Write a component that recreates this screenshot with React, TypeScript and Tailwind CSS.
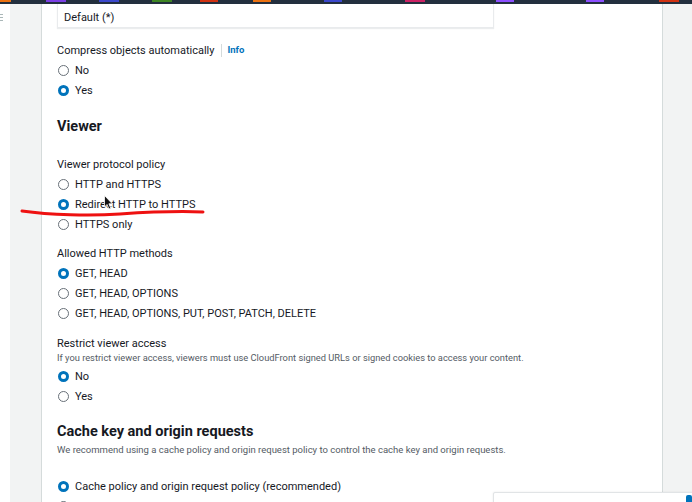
import React from "react";

function Radio({ checked, label }: { checked?: boolean; label: string }) {
  return (
    <div className="flex h-[20px] items-center">
      {checked ? (
        <span className="ml-[1px] box-border h-[11px] w-[11px] rounded-full border-[3.5px] border-[#0073bb] bg-white" />
      ) : (
        <span className="ml-[1px] box-border h-[11px] w-[11px] rounded-full border-[1.5px] border-[#687078] bg-white" />
      )}
      <span className="ml-[6px] text-[11px] leading-none text-[#16191f]">{label}</span>
    </div>
  );
}

const marks: [number, number, string][] = [
  [0, 11, "#ec7211"],
  [46, 20, "#7b3fe4"],
  [99, 20, "#3b48cc"],
  [152, 20, "#3f8624"],
  [200, 18, "#d13212"],
  [253, 18, "#ec7211"],
  [324, 18, "#3b48cc"],
  [405, 20, "#cc2264"],
  [496, 18, "#8c4fff"],
  [586, 18, "#8c4fff"],
  [659, 20, "#d13212"],
];

export default function App() {
  return (
    <div
      className="relative flex h-[502px] w-[692px] flex-col overflow-hidden bg-white"
      style={{ fontFamily: "Roboto, 'Liberation Sans', sans-serif" }}
    >
      {/* top bar */}
      <div className="relative h-[4px] w-full shrink-0 bg-[#232f3e]">
        {marks.map(([x, w, c], i) => (
          <span
            key={i}
            className="absolute top-0 h-[2px]"
            style={{ left: x, width: w, background: c }}
          />
        ))}
      </div>

      <div className="flex flex-1">
        <div className="relative w-[10px] shrink-0 bg-white">
          <div className="mt-[10px] ml-0 flex w-[3px] flex-col gap-[2px]">
            <span className="h-px bg-[#aab7b8]" />
            <span className="h-px bg-[#aab7b8]" />
            <span className="h-px bg-[#aab7b8]" />
          </div>
        </div>
        <div className="box-border w-[32px] shrink-0 border-r border-[#d5dbdb] bg-[#f2f3f3]" />

        {/* card */}
        <div className="flex-1 bg-white pl-[15px]">
          {/* select box */}
          <div className="box-border flex h-[24px] w-[437px] items-center border-x border-b border-[#e9ebed] pl-[6px] pt-[3px] shadow-[0_1px_1px_rgba(0,28,36,0.08)]">
            <span className="text-[11px] leading-none text-[#16191f]">Default (*)</span>
          </div>

          <div className="mt-[12px] flex h-[20px] items-center">
            <span className="text-[11px] leading-none text-[#16191f]">Compress objects automatically</span>
            <span className="mx-[6px] h-[13px] w-px bg-[#d5dbdb]" />
            <span className="text-[9.5px] font-bold leading-none text-[#0073bb]">Info</span>
          </div>
          <Radio label="No" />
          <Radio checked label="Yes" />

          <div className="mt-[15px] flex h-[24px] items-center">
            <span className="text-[14.5px] font-bold leading-none text-[#16191f]">Viewer</span>
          </div>

          <div className="mt-[15px] flex h-[20px] items-center">
            <span className="text-[11px] leading-none text-[#16191f]">Viewer protocol policy</span>
          </div>
          <Radio label="HTTP and HTTPS" />
          <Radio checked label="Redirect HTTP to HTTPS" />
          <Radio label="HTTPS only" />

          <div className="mt-[9px] flex h-[20px] items-center">
            <span className="text-[11px] leading-none text-[#16191f]">Allowed HTTP methods</span>
          </div>
          <Radio checked label="GET, HEAD" />
          <Radio label="GET, HEAD, OPTIONS" />
          <Radio label="GET, HEAD, OPTIONS, PUT, POST, PATCH, DELETE" />

          <div className="mt-[12px] flex h-[16px] items-center">
            <span className="text-[11px] leading-none text-[#16191f]">Restrict viewer access</span>
          </div>
          <div className="flex h-[13px] items-center">
            <span className="text-[9.3px] leading-none text-[#545b64]">
              If you restrict viewer access, viewers must use CloudFront signed URLs or signed cookies to access your content.
            </span>
          </div>
          <div className="mt-[2px]">
            <Radio checked label="No" />
            <Radio label="Yes" />
          </div>

          <div className="mt-[15px] flex h-[22px] items-center">
            <span className="text-[14.5px] font-bold leading-none text-[#16191f]">Cache key and origin requests</span>
          </div>
          <div className="flex h-[13px] items-center">
            <span className="text-[9.5px] leading-none text-[#545b64]">
              We recommend using a cache policy and origin request policy to control the cache key and origin requests.
            </span>
          </div>
          <div className="mt-[20px]">
            <Radio checked label="Cache policy and origin request policy (recommended)" />
            <Radio label="Legacy cache settings" />
          </div>
        </div>

        <div className="box-border w-[30px] shrink-0 border-l border-[#d5dbdb] bg-[#f2f3f3]" />
      </div>

      {/* floating panel bottom right */}
      <div className="absolute left-[493px] top-[492px] h-[30px] w-[210px] rounded-[2px] border border-[#e1e4e6] bg-white shadow-[0_0_2px_rgba(0,0,0,0.1)]">
        <span className="absolute left-[192px] top-[2px] h-[10px] w-[6px] rounded-[2px] bg-[#0073bb]" />
      </div>

      {/* annotation overlay */}
      <svg className="pointer-events-none absolute left-0 top-0" width="692" height="502" viewBox="0 0 692 502">
        <path
          d="M22 211 C 50 215, 90 216, 120 214 S 180 211, 203 212"
          fill="none"
          stroke="#ee1111"
          strokeWidth="3"
          strokeLinecap="round"
        />
        <path
          d="M104.5 195.5 L104.5 207 L107 204.5 L109 209 L110.8 208.2 L108.9 203.8 L112.3 203.8 Z"
          fill="#111"
          stroke="#fff"
          strokeWidth="0.8"
          strokeLinejoin="round"
        />
      </svg>
    </div>
  );
}
